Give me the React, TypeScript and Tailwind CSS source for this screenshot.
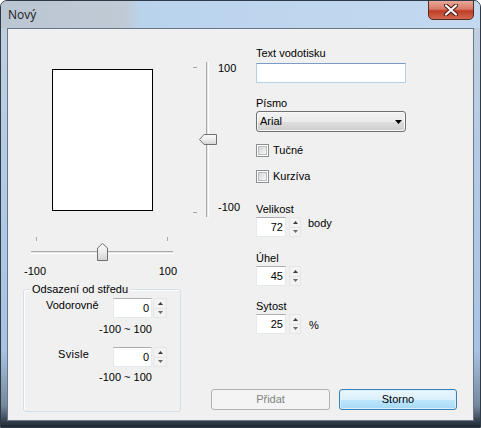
import React from 'react';

function SpinArrows({ className }: { className: string }) {
  return (
    <div className={`flex flex-col h-[20px] ${className}`}>
      <div className="flex-1 flex items-center justify-center border border-[#e6e6e6] bg-[#f2f2f2]">
        <svg width="5" height="3" viewBox="0 0 5 3">
          <path d="M0 3 L2.5 0 L5 3 Z" fill="#3c3c3c" />
        </svg>
      </div>
      <div className="flex-1 flex items-center justify-center border border-t-0 border-[#e6e6e6] bg-[#f2f2f2]">
        <svg width="5" height="3" viewBox="0 0 5 3">
          <path d="M0 0 L5 0 L2.5 3 Z" fill="#6a6a6a" />
        </svg>
      </div>
    </div>
  );
}

function NumBox({ value, className }: { value: string; className: string }) {
  return (
    <div
      className={`h-[20px] bg-white border border-[#e3e9ef] border-t-[#abadb3] flex items-center justify-end pr-[2px] ${className}`}
    >
      {value}
    </div>
  );
}

function CheckBox({ label, className }: { label: string; className: string }) {
  return (
    <div className={`flex items-center ${className}`}>
      <div className="w-[13px] h-[13px] border border-[#8e8f8f] bg-white p-[1px]">
        <div className="w-full h-full border border-[#b9bcc0] bg-[linear-gradient(135deg,#d3d6da,#f7f7f7)]" />
      </div>
      <span className="ml-[4px]">{label}</span>
    </div>
  );
}

function HThumb() {
  return (
    <svg width="11" height="18" viewBox="0 0 11 18" className="absolute left-[66px] top-[6px]">
      <defs>
        <linearGradient id="ht" x1="0" y1="0" x2="0" y2="1">
          <stop offset="0" stopColor="#fbfbfb" />
          <stop offset="0.5" stopColor="#ececec" />
          <stop offset="1" stopColor="#d2d2d2" />
        </linearGradient>
      </defs>
      <path d="M5.5 0.5 L10.5 5 L10.5 17.5 L0.5 17.5 L0.5 5 Z" fill="url(#ht)" stroke="#707070" />
    </svg>
  );
}

function VThumb() {
  return (
    <svg width="18" height="11" viewBox="0 0 18 11" className="absolute left-[7px] top-[72px]">
      <defs>
        <linearGradient id="vt" x1="0" y1="0" x2="0" y2="1">
          <stop offset="0" stopColor="#fbfbfb" />
          <stop offset="0.5" stopColor="#ececec" />
          <stop offset="1" stopColor="#d2d2d2" />
        </linearGradient>
      </defs>
      <path d="M0.5 5.5 L5 0.5 L17.5 0.5 L17.5 10.5 L5 10.5 Z" fill="url(#vt)" stroke="#707070" />
    </svg>
  );
}

export default function App() {
  return (
    <div className="w-[481px] h-[428px] overflow-hidden rounded-t-[7px] border border-[#2f3a46] flex flex-col bg-[linear-gradient(180deg,#c2cfdc_0%,#b3cbe6_40%,#a8c3e3_82%,#75889c_95%,#1c2630_100%)] font-['Liberation_Sans',Arial,sans-serif] text-[11px] leading-[13px] text-black">
      {/* title bar */}
      <div className="h-[27px] flex items-start justify-between bg-[linear-gradient(90deg,#bac6d2_0%,#c0cad5_26%,#bad3ec_29%,#c2d9f0_100%)]">
        <span className="pl-[7px] pt-[6px] font-['Open_Sans',Arial,sans-serif] text-[12px] leading-[16px] text-[#1a1a1a]">
          Nový
        </span>
        <div className="-mt-[1px] mr-[6px] w-[46px] h-[20px] rounded-b-[5px] border border-[#5b2a22] bg-[linear-gradient(180deg,#e6a899_0%,#d77a66_45%,#c13d27_55%,#d0684d_100%)] flex items-center justify-center">
          <svg width="14" height="12" viewBox="0 0 14 12">
            <path d="M2 1.5 L12 10.5 M12 1.5 L2 10.5" stroke="#4b1a12" strokeWidth="4.2" strokeLinecap="round" />
            <path d="M2 1.5 L12 10.5 M12 1.5 L2 10.5" stroke="#ffffff" strokeWidth="2.2" strokeLinecap="round" />
          </svg>
        </div>
      </div>

      {/* client area */}
      <div className="mx-[6px] h-[393px] border border-[#69778a] bg-[#f0f0f0] flex">
        {/* left column */}
        <div className="w-[182px] flex flex-col">
          <div className="mt-[40px] ml-[44px] w-[101px] h-[142px] border border-black bg-white" />

          <div className="mt-[26px] ml-[23px] w-[142px] h-[24px] relative">
            <div className="absolute left-[5px] top-0 w-px h-[4px] bg-[#a8a8a8]" />
            <div className="absolute left-[136px] top-0 w-px h-[4px] bg-[#a8a8a8]" />
            <div className="absolute left-0 right-0 top-[14px] h-[3px] border-t border-[#a9a9a9] bg-[#e6e6e6] border-b border-b-white" />
            <HThumb />
          </div>

          <div className="mt-[4px] ml-[16px] w-[153px] flex justify-between">
            <span>-100</span>
            <span>100</span>
          </div>

          <div className="mt-[11px] ml-[15px] w-[158px] h-[123px] rounded-[3px] border border-[#d5dfe5] shadow-[inset_1px_1px_0_#ffffff] relative flex flex-col pt-[8px]">
            <span className="absolute left-[6px] -top-[7px] px-[2px] bg-[#f0f0f0]">Odsazení od středu</span>
            <div className="flex items-start">
              <span className="ml-[22px] w-[67px] mt-[1px]">Vodorovně</span>
              <NumBox value="0" className="w-[39px]" />
              <SpinArrows className="w-[14px] ml-[1px]" />
            </div>
            <span className="mt-[5px] ml-[75px]">-100 ~ 100</span>
            <div className="flex items-start mt-[11px]">
              <span className="ml-[34px] w-[55px] mt-[1px] tracking-[0.3px]">Svisle</span>
              <NumBox value="0" className="w-[39px]" />
              <SpinArrows className="w-[14px] ml-[1px]" />
            </div>
            <span className="mt-[4px] ml-[75px]">-100 ~ 100</span>
          </div>
        </div>

        {/* right area */}
        <div className="flex-1 flex flex-col">
          <div className="flex">
            {/* vertical slider */}
            <div className="w-[66px] flex">
              <div className="mt-[33px] ml-[2px] w-[26px] h-[155px] relative">
                <div className="absolute left-[1px] top-[5px] w-[4px] h-px bg-[#a8a8a8]" />
                <div className="absolute left-[1px] top-[150px] w-[4px] h-px bg-[#a8a8a8]" />
                <div className="absolute left-[14px] top-0 bottom-0 w-[3px] border-l border-[#a9a9a9] bg-[#e6e6e6] border-r border-r-white" />
                <VThumb />
              </div>
              <div className="mt-[33px] h-[152px] flex flex-col justify-between">
                <span>100</span>
                <span>-100</span>
              </div>
            </div>

            {/* fields */}
            <div className="flex-1 flex flex-col">
              <span className="mt-[18px]">Text vodotisku</span>
              <div className="mt-[3px] w-[150px] h-[20px] bg-white border border-[#b5cfe9] border-t-[#7b9cc4]" />

              <span className="mt-[14px]">Písmo</span>
              <div className="mt-[1px] w-[150px] h-[21px] rounded-[3px] border border-[#707070] bg-[linear-gradient(180deg,#f2f2f2_0%,#ebebeb_50%,#dddddd_51%,#cfcfcf_100%)] shadow-[inset_0_0_0_1px_#f8f8f8] flex items-center justify-between pl-[3px] pr-[3px]">
                <span>Arial</span>
                <svg width="7" height="4" viewBox="0 0 7 4">
                  <path d="M0 0 L7 0 L3.5 4 Z" fill="#000" />
                </svg>
              </div>

              <CheckBox label="Tučné" className="mt-[12px]" />
              <CheckBox label="Kurzíva" className="mt-[13px]" />

              <span className="mt-[20px]">Velikost</span>
              <div className="mt-[1px] flex items-start">
                <NumBox value="72" className="w-[30px]" />
                <SpinArrows className="w-[12px] ml-[3px]" />
                <span className="ml-[7px]">body</span>
              </div>

              <span className="mt-[15px]">Úhel</span>
              <div className="mt-[1px] flex items-start">
                <NumBox value="45" className="w-[30px]" />
                <SpinArrows className="w-[12px] ml-[3px]" />
              </div>

              <span className="mt-[14px]">Sytost</span>
              <div className="mt-[1px] flex items-start">
                <NumBox value="25" className="w-[30px]" />
                <SpinArrows className="w-[12px] ml-[3px]" />
                <span className="ml-[8px] mt-[5px]">%</span>
              </div>
            </div>
          </div>

          {/* buttons */}
          <div className="mt-auto mb-[10px] ml-[21px] flex">
            <div className="w-[119px] h-[21px] rounded-[3px] border border-[#adb2b5] bg-[#f4f4f4] text-[#838383] flex items-center justify-center">
              Přidat
            </div>
            <div className="ml-[9px] w-[118px] h-[21px] rounded-[3px] border border-[#3c7fb1] bg-[linear-gradient(180deg,#eaf6fd_0%,#d9f0fc_50%,#bee6fd_51%,#a7d9f5_100%)] shadow-[inset_0_0_0_1px_#d8f0fb] flex items-center justify-center">
              Storno
            </div>
          </div>
        </div>
      </div>
    </div>
  );
}
